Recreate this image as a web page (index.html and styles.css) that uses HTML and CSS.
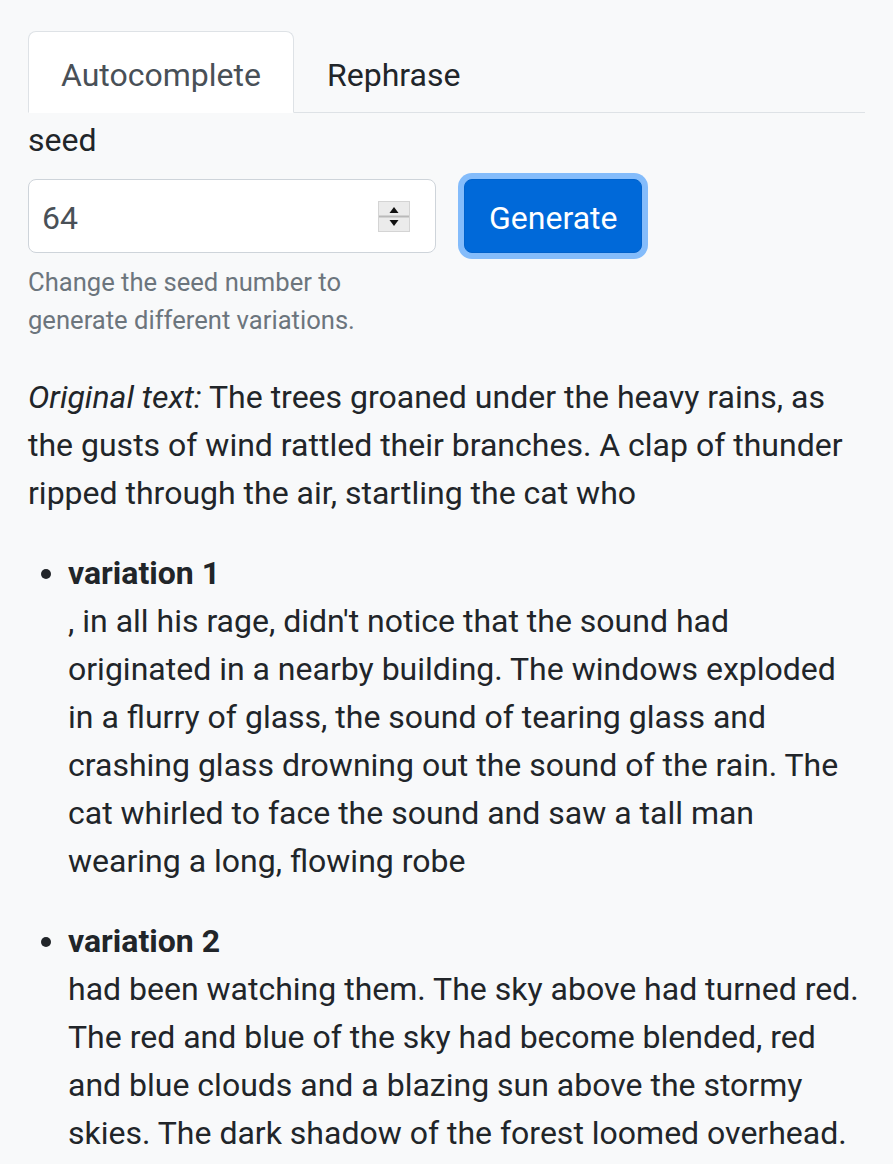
FILE: index.html
```html
<!DOCTYPE html>
<html lang="en">
<head>
<meta charset="utf-8">
<title>Autocomplete</title>
<link rel="stylesheet" href="styles.css">
</head>
<body>
<div class="page">
  <ul class="tabs">
    <li class="tab active">Autocomplete</li>
    <li class="tab">Rephrase</li>
  </ul>
  <div class="form-group">
    <label class="label">seed</label>
    <div class="row">
      <div class="field">
        <div class="input">
          <span class="value">64</span>
          <svg class="spin" width="32" height="31" viewBox="0 0 32 31">
            <rect x="0.5" y="0.5" width="31" height="30" fill="#ebebeb" stroke="#d4d4d4"/>
            <line x1="1" y1="15.5" x2="31" y2="15.5" stroke="#b9b9b9" stroke-width="2"/>
            <polygon points="16,6 20.5,12 11.5,12" fill="#111"/>
            <polygon points="11.5,19 20.5,19 16,25" fill="#111"/>
          </svg>
        </div>
        <div class="help">Change the seed number to generate different variations.</div>
      </div>
      <button class="btn">Generate</button>
    </div>
  </div>
  <p class="original"><em>Original text:</em> The trees groaned under the heavy rains, as the gusts of wind rattled their branches. A clap of thunder ripped through the air, startling the cat who</p>
  <ul class="variations">
    <li><strong>variation 1</strong><br>, in all his rage, didn't notice that the sound had originated in a nearby building. The windows exploded in a flurry of glass, the sound of tearing glass and crashing glass drowning out the sound of the rain. The cat whirled to face the sound and saw a tall man wearing a long, flowing robe</li>
    <li><strong>variation 2</strong><br>had been watching them. The sky above had turned red. The red and blue of the sky had become blended, red and blue clouds and a blazing sun above the stormy skies. The dark shadow of the forest loomed overhead.</li>
  </ul>
</div>
</body>
</html>
```

FILE: styles.css
```css
html, body {
  margin: 0;
  padding: 0;
  background: #f8f9fa;
}
body {
  font-family: Roboto, "Liberation Sans", sans-serif;
  font-size: 32px;
  line-height: 48px;
  color: #212529;
}
.page {
  padding: 31px 28px 0 28px;
}
.tabs {
  list-style: none;
  margin: 0;
  padding: 0;
  display: flex;
  border-bottom: 1px solid #dee2e6;
}
.tab {
  padding: 19px 32px 13px 32px;
  margin-bottom: -1px;
  border: 1px solid transparent;
  border-top-left-radius: 8px;
  border-top-right-radius: 8px;
  color: #212529;
}
.tab.active {
  background: #fff;
  border-color: #dee2e6 #dee2e6 #fff;
  color: #495057;
}
.form-group {
  margin-bottom: 33px;
}
.label {
  display: block;
  padding-top: 3px;
  margin-bottom: 15px;
}
.row {
  display: flex;
  align-items: flex-start;
  gap: 28px;
}
.field {
  width: 408px;
}
.input {
  box-sizing: border-box;
  height: 74px;
  display: flex;
  align-items: center;
  justify-content: space-between;
  padding: 0 25px 0 13px;
  background: #fff;
  border: 1px solid #ced4da;
  border-radius: 8px;
  color: #495057;
}
.value {
  margin-top: 4px;
}
.spin {
  display: block;
  margin-top: 1px;
}
.help {
  margin-top: 10px;
  font-size: 25.6px;
  line-height: 38.4px;
  color: #6c757d;
  width: 360px;
}
.btn {
  font-family: inherit;
  font-size: 32px;
  line-height: 48px;
  height: 74px;
  padding: 14px 24px 10px 24px;
  color: #fff;
  background: #0069d9;
  border: 1px solid #0062cc;
  border-radius: 8px;
  box-shadow: 0 0 0 6px #84bcfb;
}
.original {
  margin: 0 0 32px 0;
}
.variations {
  margin: 0;
  padding-left: 40px;
}
.variations li {
  margin-bottom: 32px;
}
```
